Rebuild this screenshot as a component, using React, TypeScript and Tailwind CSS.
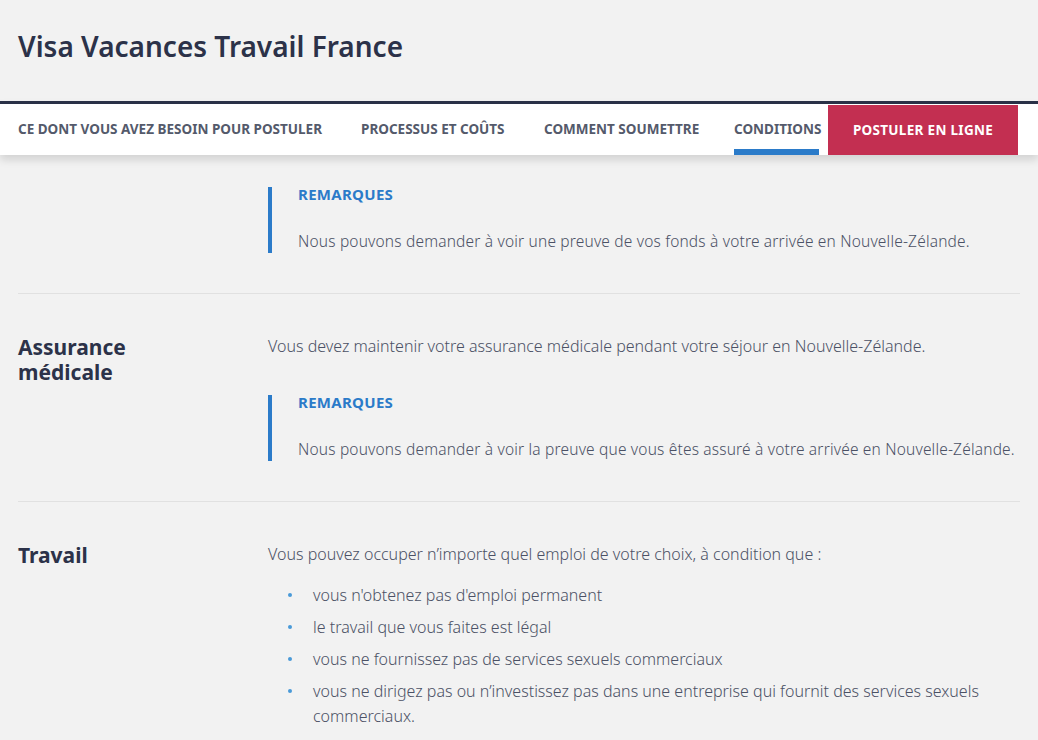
import React from "react";

const TABS = [
  { label: "CE DONT VOUS AVEZ BESOIN POUR POSTULER", w: "w-[308px]" },
  { label: "PROCESSUS ET COÛTS", w: "w-[148px]" },
  { label: "COMMENT SOUMETTRE", w: "w-[155px]" },
  { label: "CONDITIONS", w: "w-[85px]", active: true },
];

const WORK = [
  "vous n'obtenez pas d'emploi permanent",
  "le travail que vous faites est légal",
  "vous ne fournissez pas de services sexuels commerciaux",
  "vous ne dirigez pas ou n’investissez pas dans une entreprise qui fournit des services sexuels commerciaux.",
];

function Remarques({ text }: { text: string }) {
  return (
    <div className="border-l-4 border-[#2b7bc9] pl-[26px]">
      <div className="text-[15px] leading-[14px] font-bold text-[#2b7bc9] tracking-[0.3px]">REMARQUES</div>
      <p className="mt-[28px] text-[15.5px] leading-[24px] font-light text-[#4b5165] tracking-[0.18px] whitespace-nowrap">{text}</p>
    </div>
  );
}

function Section({ title, children, last }: { title?: React.ReactNode; children: React.ReactNode; last?: boolean }) {
  return (
    <section className={`grid grid-cols-[250px_1fr] pb-10 ${last ? "" : "border-b border-[#e1e1e1]"}`}>
      <h2 className="text-[21px] leading-[25px] font-bold text-[#2c3249] pt-[1px]">{title}</h2>
      <div>{children}</div>
    </section>
  );
}

export default function App() {
  return (
    <div className="min-h-[740px] bg-[#f2f2f2] text-[#4b5165]" style={{ fontFamily: "'Noto Sans', 'Open Sans', sans-serif" }}>
      <header className="h-[101px] px-[18px] pt-[29px]">
        <h1 className="text-[28px] leading-[34px] font-semibold text-[#2c3249]">Visa Vacances Travail France</h1>
      </header>

      <nav className="sticky top-0 z-10 border-t-[3px] border-[#2a3147] bg-white shadow-[0_5px_8px_rgba(0,0,0,0.13)]">
        <div className="flex h-[51px] px-[18px]">
          <div className="flex gap-[35px]">
            {TABS.map(t => (
              <div key={t.label} className={`relative flex items-center ${t.w} text-[13.5px] font-bold text-[#545a6b] whitespace-nowrap`}>
                {t.label}
                {t.active && <span className="absolute left-0 right-0 bottom-0 h-[6px] bg-[#2b7bc9]" />}
              </div>
            ))}
          </div>
          <div className="ml-[9px] mt-[1px] flex w-[190px] items-center justify-center bg-[#c32f51] text-[13.5px] font-bold text-white tracking-[0.3px]">
            POSTULER EN LIGNE
          </div>
        </div>
      </nav>

      <main className="px-[18px]">
        <div className="pt-[32px]">
          <Section>
            <Remarques text="Nous pouvons demander à voir une preuve de vos fonds à votre arrivée en Nouvelle-Zélande." />
          </Section>
        </div>

        <div className="pt-10">
          <Section title={<>Assurance<br />médicale</>}>
            <p className="text-[16px] leading-[24px] font-light mb-[37px]">
              Vous devez maintenir votre assurance médicale pendant votre séjour en Nouvelle-Zélande.
            </p>
            <Remarques text="Nous pouvons demander à voir la preuve que vous êtes assuré à votre arrivée en Nouvelle-Zélande." />
          </Section>
        </div>

        <div className="pt-10">
          <Section title="Travail" last>
            <p className="text-[16px] leading-[24px] font-light">
              Vous pouvez occuper n’importe quel emploi de votre choix, à condition que :
            </p>
            <ul className="mt-[17px] flex flex-col gap-[7px]">
              {WORK.map(w => (
                <li key={w} className="relative pl-[45px] text-[16px] leading-[25px] font-light">
                  <span className="absolute left-[20px] top-[10px] h-[4px] w-[4px] rounded-full bg-[#4a9ad8]" />
                  {w}
                </li>
              ))}
            </ul>
          </Section>
        </div>
      </main>
    </div>
  );
}
